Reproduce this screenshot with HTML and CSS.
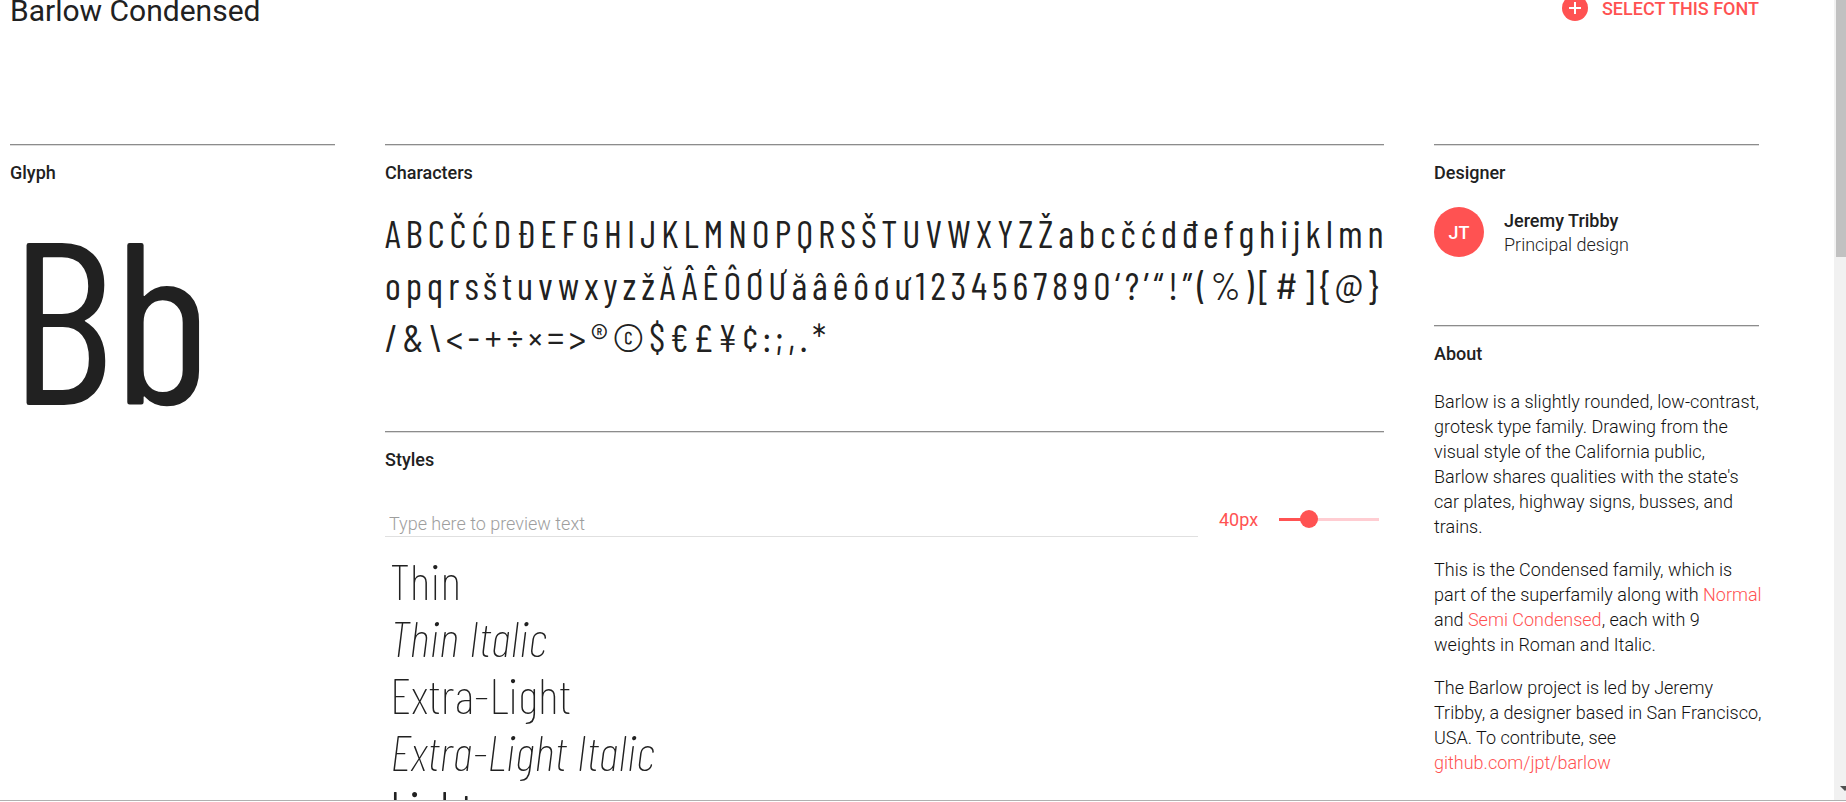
FILE: index.html
```html
<!DOCTYPE html>
<html lang="en">
<head>
<meta charset="utf-8">
<title>Barlow Condensed</title>
<link rel="stylesheet" href="styles.css">
</head>
<body>
<div class="window">
  <div class="page">
    <header class="topbar">
      <h1 class="family-name">Barlow Condensed</h1>
      <button class="select-font" type="button">
        <svg class="select-icon" viewBox="0 0 26 26" aria-hidden="true"><circle cx="13" cy="13" r="13"/><path d="M13 7v12M7 13h12"/></svg>
        <span>SELECT THIS FONT</span>
      </button>
    </header>
    <main class="columns">
      <section class="panel">
        <h2 class="panel-title">Glyph</h2>
        <div class="glyph">Bb</div>
      </section>
      <div class="stack">
        <section class="panel">
          <h2 class="panel-title">Characters</h2>
          <p class="characters">ABCČĆDĐEFGHIJKLMNOPQRSŠTUVWXYZŽabcčćdđefghijklmn<br>opqrsštuvwxyzžĂÂÊÔƠƯăâêôơư1234567890‘?’“!”(%)[#]{@}<br>/&amp;\&lt;-+÷×=&gt;®©$€£¥¢:;,.*</p>
        </section>
        <section class="panel">
          <h2 class="panel-title">Styles</h2>
          <div class="preview-bar">
            <input class="preview-text" type="text" placeholder="Type here to preview text" aria-label="Preview text">
            <label class="size-label" for="size">40px</label>
            <input class="size-slider" id="size" type="range" min="8" max="136" value="40">
          </div>
          <ul class="styles">
            <li class="thin">Thin</li>
            <li class="thin italic">Thin Italic</li>
            <li class="extra-light">Extra-Light</li>
            <li class="extra-light italic">Extra-Light Italic</li>
            <li class="light">Light</li>
          </ul>
        </section>
      </div>
      <aside class="stack">
        <section class="panel">
          <h2 class="panel-title">Designer</h2>
          <div class="designer">
            <span class="avatar">JT</span>
            <div class="designer-text">
              <div class="designer-name">Jeremy Tribby</div>
              <div>Principal design</div>
            </div>
          </div>
        </section>
        <section class="panel about">
          <h2 class="panel-title">About</h2>
          <p>Barlow is a slightly rounded, low-contrast, grotesk type family. Drawing from the visual style of the California public,<br>Barlow shares qualities with the state's car plates, highway signs, busses, and<br>trains.</p>
          <p>This is the Condensed family, which is part of the superfamily along with <a href="#normal">Normal</a> and <a href="#semi-condensed">Semi Condensed</a>, each with 9 weights in Roman and Italic.</p>
          <p>The Barlow project is led by Jeremy Tribby, a designer based in San Francisco, USA. To contribute, see <a href="#github">github.com/jpt/barlow</a></p>
        </section>
      </aside>
    </main>
  </div>
  <div class="scrollbar" aria-hidden="true">
    <div class="scroll-thumb"></div>
    <svg class="scroll-arrow" viewBox="0 0 6 5"><path d="M0 0h10L5 5z"/></svg>
  </div>
</div>
</body>
</html>
```
FILE: styles.css
```css
:root {
  --ink: #212121;
  --accent: #ff5252;
  --condensed: "Barlow Condensed", "Roboto Condensed", "Liberation Sans Narrow", sans-serif;
}

* { box-sizing: border-box; }

body {
  margin: 0;
  background: #fff;
  color: var(--ink);
  font: 300 18px/25px Roboto, sans-serif;
}

.window {
  display: flex;
  height: calc(100vh - 1px);
  overflow: hidden;
  border-bottom: 1px solid #b0b0b0;
}

.page {
  flex: 1;
  min-width: 0;
  padding: 0 75px 0 10px;
}

.topbar {
  display: flex;
  justify-content: space-between;
  align-items: flex-start;
  height: 40px;
  margin-top: -9px;
}

.family-name {
  margin: 0;
  font-size: 30px;
  font-weight: 400;
  line-height: 40px;
}

.select-font {
  display: flex;
  align-items: center;
  gap: 14px;
  height: 34px;
  padding: 0;
  border: 0;
  background: none;
  color: var(--accent);
  font: 500 18px/25px Roboto, sans-serif;
}

.select-icon { width: 26px; height: 26px; }
.select-icon circle { fill: var(--accent); }
.select-icon path { stroke: #fff; stroke-width: 2; }

.columns {
  display: grid;
  grid-template-columns: 325px minmax(0, 1fr) 325px;
  column-gap: 50px;
  padding-top: 113px;
}

.panel {
  padding-top: 15px;
  border-top: 1px solid #8c8c8c;
  box-shadow: inset 0 1px #dcdcdc;
}

.panel-title {
  margin: 0;
  font-size: 18px;
  font-weight: 500;
  line-height: 25px;
}

.stack {
  display: flex;
  flex-direction: column;
  gap: 68px;
}

.glyph {
  padding: 8px 0;
  font: 400 230px/240px var(--condensed);
}

.characters {
  margin: 22px 0 0;
  font: 400 38px/52px var(--condensed);
  letter-spacing: 5px;
  white-space: nowrap;
}

.preview-bar {
  display: flex;
  align-items: center;
  margin-top: 29px;
}

.preview-text {
  flex: 1;
  height: 36px;
  padding: 10px 4px 0;
  border: 0;
  border-bottom: 1px solid #e0e0e0;
  color: var(--ink);
  font: 300 18px/25px Roboto, sans-serif;
}

.preview-text::placeholder { color: #9e9e9e; }

.size-label {
  width: 60px;
  margin: 0 0 0 21px;
  color: var(--accent);
  font-weight: 400;
}

.size-slider {
  width: 100px;
  height: 18px;
  margin: 0 5px 0 0;
  appearance: none;
  background: linear-gradient(90deg, var(--accent) 30%, #ffcdd2 30%) center / 100% 3px no-repeat;
}

.size-slider::-webkit-slider-thumb {
  appearance: none;
  width: 18px;
  height: 18px;
  border-radius: 50%;
  background: var(--accent);
}

.styles {
  margin: 15px 0 0;
  padding: 0 5px;
  list-style: none;
  font: 400 50px/57px var(--condensed);
}

.italic { font-style: italic; }
.thin { font-weight: 100; }
.extra-light { font-weight: 200; }
.light { font-weight: 300; }

.designer {
  display: flex;
  gap: 20px;
  margin-top: 22px;
}

.avatar {
  display: flex;
  align-items: center;
  justify-content: center;
  width: 50px;
  height: 50px;
  border-radius: 50%;
  background: var(--accent);
  color: #fff;
  font-weight: 500;
}

.designer-text {
  padding-top: 2px;
  line-height: 24px;
}

.designer-name { font-weight: 500; }

.about p {
  margin: 0 -5px 18px 0;
  color: #111;
}

.about .panel-title { margin-bottom: 23px; }

.about a {
  color: var(--accent);
  text-decoration: none;
}

.scrollbar {
  display: flex;
  flex-direction: column;
  justify-content: space-between;
  align-items: flex-end;
  width: 12px;
  padding-bottom: 9px;
  background: #f1f1f1;
}

.scroll-thumb {
  width: 10px;
  height: 257px;
  background: #c1c1c1;
}

.scroll-arrow {
  width: 6px;
  height: 5px;
  fill: #505050;
}
```
